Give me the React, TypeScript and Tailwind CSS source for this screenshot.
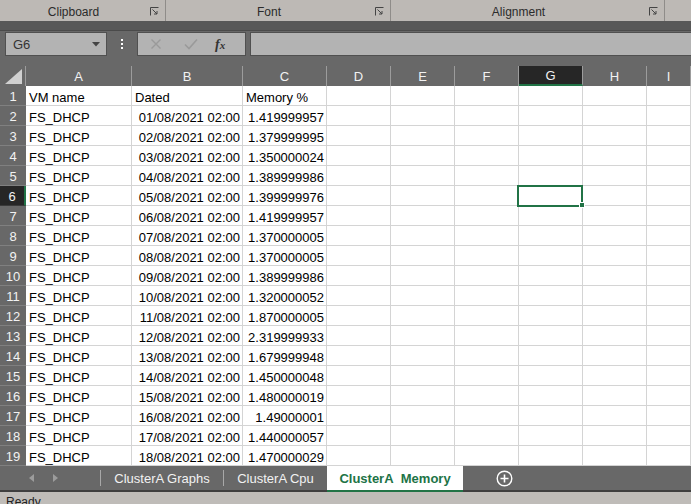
import React from 'react';

const COLS = ['A', 'B', 'C', 'D', 'E', 'F', 'G', 'H', 'I'];

const DATA: [string, string][] = [
  ['01/08/2021 02:00', '1.419999957'],
  ['02/08/2021 02:00', '1.379999995'],
  ['03/08/2021 02:00', '1.350000024'],
  ['04/08/2021 02:00', '1.389999986'],
  ['05/08/2021 02:00', '1.399999976'],
  ['06/08/2021 02:00', '1.419999957'],
  ['07/08/2021 02:00', '1.370000005'],
  ['08/08/2021 02:00', '1.370000005'],
  ['09/08/2021 02:00', '1.389999986'],
  ['10/08/2021 02:00', '1.320000052'],
  ['11/08/2021 02:00', '1.870000005'],
  ['12/08/2021 02:00', '2.319999933'],
  ['13/08/2021 02:00', '1.679999948'],
  ['14/08/2021 02:00', '1.450000048'],
  ['15/08/2021 02:00', '1.480000019'],
  ['16/08/2021 02:00', '1.49000001'],
  ['17/08/2021 02:00', '1.440000057'],
  ['18/08/2021 02:00', '1.470000029'],
];

const GRID = 'grid grid-cols-[26px_106px_111px_84px_64px_64px_64px_64px_64px_1fr]';
// Excel sits text low in the cell, so push it down a couple of pixels
const CELL = 'h-5 border-r border-b border-[#d4d4d4] bg-white pt-[2px] text-[13px] leading-[19px] text-black whitespace-nowrap overflow-hidden';

// little "dialog launcher" square in the corner of a ribbon group
function Launcher() {
  return (
    <svg width="9" height="9" viewBox="0 0 9 9" className="text-[#444]">
      <path d="M0.5 8.5V0.5H8.5" fill="none" stroke="currentColor" />
      <path d="M2.5 2.5L7 7M7 4V7H4" fill="none" stroke="currentColor" />
    </svg>
  );
}

function RibbonGroup({ label, width }: { label: string; width: string }) {
  return (
    <div className={`relative flex h-full shrink-0 items-center justify-center border-r border-[#8f8c89] pt-[3px] pr-[18px] ${width}`}>
      <span>{label}</span>
      <span className="absolute right-[6px] top-[7px]">
        <Launcher />
      </span>
    </div>
  );
}

function Ribbon() {
  return (
    <div className="flex h-[21px] bg-[#bdb9b5] text-[12px] text-[#2b2b2b]">
      <RibbonGroup label="Clipboard" width="w-[166px]" />
      <RibbonGroup label="Font" width="w-[225px]" />
      <RibbonGroup label="Alignment" width="w-[274px]" />
    </div>
  );
}

function FormulaBar() {
  return (
    <div className="bg-[#686868]">
      <div className="h-[10px] border-b border-[#4a4a4a] bg-[#585858]" />
      <div className="flex h-[25px] items-stretch pt-px">
        <div className="ml-[5px] flex w-[102px] items-center justify-between border border-[#505050] bg-[#b3b3b3] pl-[7px] pr-[6px] pt-px text-[13px] text-[#333]">
          <span>G6</span>
          <svg width="8" height="5" viewBox="0 0 8 5">
            <path d="M0 0H8L4 4.5Z" fill="#444" />
          </svg>
        </div>
        <div className="flex w-[30px] flex-col items-center justify-center gap-[2px]">
          <span className="h-[2px] w-[2px] bg-white" />
          <span className="h-[2px] w-[2px] bg-white" />
          <span className="h-[2px] w-[2px] bg-white" />
        </div>
        <div className="flex w-[109px] items-center border border-[#505050] bg-[#b3b3b3]">
          <svg width="12" height="12" viewBox="0 0 12 12" className="ml-[12px]">
            <path d="M1.5 1.5L10.5 10.5M10.5 1.5L1.5 10.5" stroke="#9a9a9a" strokeWidth="1.4" />
          </svg>
          <svg width="14" height="12" viewBox="0 0 14 12" className="ml-[22px]">
            <path d="M1 6.5L5 10.5L13 1.5" fill="none" stroke="#9a9a9a" strokeWidth="1.6" />
          </svg>
          <span className="ml-[17px] font-['Liberation_Serif',serif] text-[14px] font-bold italic text-[#333]">
            f<span className="text-[11px]">x</span>
          </span>
        </div>
        <div className="ml-[4px] flex-1 border border-r-0 border-[#505050] bg-[#b3b3b3]" />
      </div>
      <div className="h-[10px]" />
    </div>
  );
}

function ColumnHeaders() {
  return (
    <div className={`${GRID} h-5 bg-[#686868] text-[13px] leading-[20px] text-[#f2f2f2]`}>
      <div className="flex items-end justify-end border-r border-[#9c9c9c] pr-[3px] pb-[2px]">
        <svg width="17" height="15" viewBox="0 0 17 15">
          <path d="M17 0V15H0Z" fill="#d0d0d0" />
        </svg>
      </div>
      {COLS.map((c) =>
        c === 'G' ? (
          <div key={c} className="border-r border-b-2 border-r-[#9c9c9c] border-b-[#217346] bg-[#262626] pt-[2px] text-center leading-[16px]">
            {c}
          </div>
        ) : (
          <div key={c} className="border-r border-[#9c9c9c] pt-[2px] text-center leading-[18px]">
            {c}
          </div>
        ),
      )}
    </div>
  );
}

function RowHeader({ n }: { n: number }) {
  const active = n === 6;
  return (
    <div
      className={`h-5 border-b pt-[2px] text-center text-[13px] leading-[17px] text-[#f2f2f2] ${
        active ? 'border-b-[#3a3a3a] border-r-2 border-r-[#217346] bg-[#262626]' : 'border-[#808080] bg-[#686868]'
      }`}
    >
      {n}
    </div>
  );
}

function Sheet() {
  const rows: string[][] = [
    ['VM name', 'Dated', 'Memory %'],
    ...DATA.map(([d, v]) => ['FS_DHCP', d, v]),
  ];
  return (
    <div className="flex-1 overflow-hidden bg-white">
      <ColumnHeaders />
      {rows.map((r, i) => (
        <div key={i} className={GRID}>
          <RowHeader n={i + 1} />
          <div className={`${CELL} pl-[3px]`}>{r[0]}</div>
          <div className={`${CELL} ${i === 0 ? 'pl-[3px]' : 'pr-[2px] text-right'}`}>{r[1]}</div>
          <div className={`${CELL} ${i === 0 ? 'pl-[3px]' : 'pr-[2px] text-right'}`}>{r[2]}</div>
          {COLS.slice(3).map((c) => (
            <div key={c} className={`${CELL} ${c === 'G' && i === 5 ? 'relative overflow-visible' : ''}`}>
              {c === 'G' && i === 5 && (
                <>
                  <div className="absolute -left-[2px] -top-[1px] z-10 h-[22px] w-[66px] border-2 border-[#217346]" />
                  <div className="absolute -bottom-[3px] -right-[3px] z-20 h-[6px] w-[6px] border border-white bg-[#217346]" />
                </>
              )}
            </div>
          ))}
        </div>
      ))}
    </div>
  );
}

function TabBar() {
  return (
    <div className="flex h-[26px] border-b-2 border-[#3f3f3f] bg-[#686868] text-[13px]">
      <div className="flex w-[100px] items-center justify-center gap-[19px] pr-[14px]">
        <svg width="5" height="8" viewBox="0 0 5 8">
          <path d="M5 0V8L0 4Z" fill="#9c9c9c" />
        </svg>
        <svg width="5" height="8" viewBox="0 0 5 8">
          <path d="M0 0V8L5 4Z" fill="#9c9c9c" />
        </svg>
      </div>
      <div className="my-[4px] w-px bg-[#a8a8a8]" />
      <div className="flex w-[122px] items-center justify-center pt-[2px] text-[#f2f2f2]">ClusterA Graphs</div>
      <div className="my-[4px] w-px bg-[#a8a8a8]" />
      <div className="flex w-[103px] items-center justify-center pt-[2px] text-[#f2f2f2]">ClusterA Cpu</div>
      <div className="-mb-[2px] flex w-[136px] items-center justify-center border-b-2 border-[#217346] bg-white pt-[2px] font-bold text-[#217346]">
        ClusterA&nbsp;&nbsp;Memory
      </div>
      <div className="flex w-[82px] items-center justify-center">
        <svg width="17" height="17" viewBox="0 0 17 17">
          <circle cx="8.5" cy="8.5" r="7.3" fill="none" stroke="#fff" strokeWidth="1.4" />
          <path d="M8.5 4.5V12.5M4.5 8.5H12.5" stroke="#fff" strokeWidth="1.6" />
        </svg>
      </div>
    </div>
  );
}

export default function App() {
  return (
    <div className="flex h-[504px] w-[691px] flex-col overflow-hidden font-['Liberation_Sans',Arial,sans-serif]">
      <Ribbon />
      <FormulaBar />
      <Sheet />
      <TabBar />
      <div className="h-[12px] overflow-hidden bg-[#bfbcb8] pl-[6px] pt-[3px] text-[12px] leading-[14px] text-[#222]">Ready</div>
    </div>
  );
}
